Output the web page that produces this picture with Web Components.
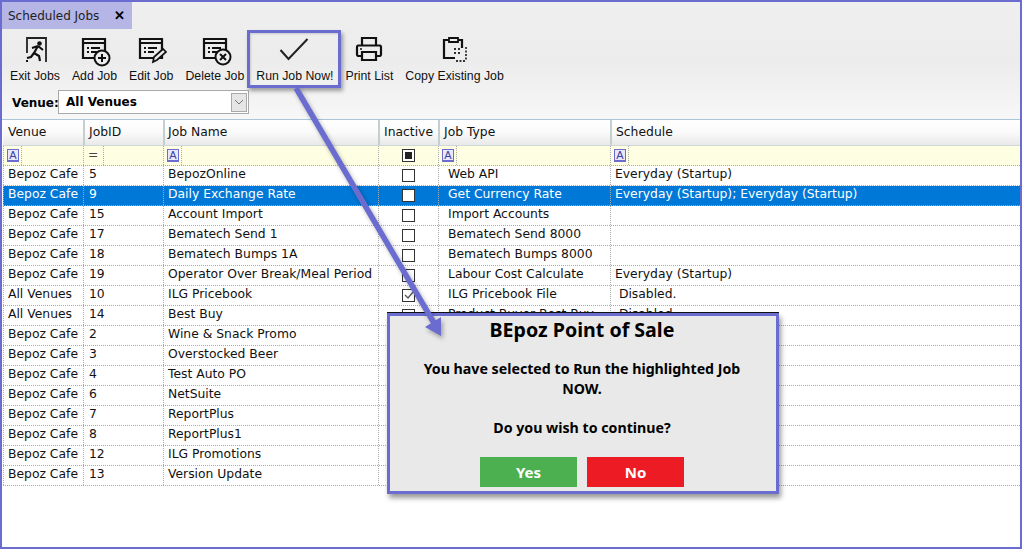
<!DOCTYPE html>
<html>
<head>
<meta charset="utf-8">
<title>Scheduled Jobs</title>
<style>
  html, body { margin: 0; padding: 0; background: #fff; }
</style>
</head>
<body>
<scheduled-jobs>
  <tab-strip label="Scheduled Jobs"></tab-strip>
  <tool-bar>
    <tool-button icon="exit" label="Exit Jobs"></tool-button>
    <tool-button icon="add" label="Add Job"></tool-button>
    <tool-button icon="edit" label="Edit Job"></tool-button>
    <tool-button icon="delete" label="Delete Job"></tool-button>
    <tool-button icon="run" label="Run Job Now!" highlight></tool-button>
    <tool-button icon="print" label="Print List"></tool-button>
    <tool-button icon="copy" label="Copy Existing Job"></tool-button>
  </tool-bar>
  <venue-select value="All Venues"></venue-select>
  <job-grid></job-grid>
  <callout-arrow></callout-arrow>
  <confirm-dialog heading="BEpoz Point of Sale">
    You have selected to Run the highlighted Job NOW.
    <br><br>
    Do you wish to continue?
  </confirm-dialog>
</scheduled-jobs>

<script>
const LABEL_FONT = '"Liberation Sans", Arial, sans-serif';
const GRID_FONT = '"DejaVu Sans", Verdana, sans-serif';

// rows of the grid: venue, id, name, inactive, type, schedule
const JOBS = [
  ['Bepoz Cafe', '5', 'BepozOnline', false, 'Web API', 'Everyday (Startup)'],
  ['Bepoz Cafe', '9', 'Daily Exchange Rate', false, 'Get Currency Rate', 'Everyday (Startup); Everyday (Startup)'],
  ['Bepoz Cafe', '15', 'Account Import', false, 'Import Accounts', ''],
  ['Bepoz Cafe', '17', 'Bematech Send 1', false, 'Bematech Send 8000', ''],
  ['Bepoz Cafe', '18', 'Bematech Bumps 1A', false, 'Bematech Bumps 8000', ''],
  ['Bepoz Cafe', '19', 'Operator Over Break/Meal Period', false, 'Labour Cost Calculate', 'Everyday (Startup)'],
  ['All Venues', '10', 'ILG Pricebook', true, 'ILG Pricebook File', '\u00a0Disabled.'],
  ['All Venues', '14', 'Best Buy', false, 'Product Buyer Best Buy', '\u00a0Disabled.'],
  ['Bepoz Cafe', '2', 'Wine & Snack Promo', false, '', ''],
  ['Bepoz Cafe', '3', 'Overstocked Beer', false, '', ''],
  ['Bepoz Cafe', '4', 'Test Auto PO', false, '', ''],
  ['Bepoz Cafe', '6', 'NetSuite', false, '', ''],
  ['Bepoz Cafe', '7', 'ReportPlus', false, '', ''],
  ['Bepoz Cafe', '8', 'ReportPlus1', false, '', ''],
  ['Bepoz Cafe', '12', 'ILG Promotions', false, '', ''],
  ['Bepoz Cafe', '13', 'Version Update', false, '', '']
];

const WINDOW_ICON = `
  <path d="M5 3h22v19H5z" fill="none" stroke="#111" stroke-width="2.200"/>
  <path d="M5 7h22" stroke="#111" stroke-width="2"/>
  <path d="M9 12h2M9 16h2M13 12h9M13 16h6" stroke="#111" stroke-width="1.800"/>`;

const ICONS = {
  exit: `
    <path d="M8 17V2h19v24" fill="none" stroke="#222" stroke-width="1.800"/>
    <circle cx="20.500" cy="7.500" r="2.300" fill="#111"/>
    <path d="M19 10l-4 7 5 3 1 5M15 17l-3 4-4 1M19 10l5 4M19 10l-6 2" fill="none" stroke="#111" stroke-width="2.200"/>
    <path d="M7 25h2" stroke="#111" stroke-width="2"/>`,
  add: `${WINDOW_ICON}
    <circle cx="24" cy="22" r="7.500" fill="#eee" stroke="#111" stroke-width="2"/>
    <path d="M24 18v8M20 22h8" stroke="#111" stroke-width="2"/>`,
  edit: `${WINDOW_ICON}
    <path d="M18 26l1-5 9-8 3 3-9 8z" fill="#eee" stroke="#111" stroke-width="1.700"/>`,
  delete: `${WINDOW_ICON}
    <circle cx="24" cy="21" r="7.500" fill="#eee" stroke="#111" stroke-width="2"/>
    <path d="M21 18l6 6M27 18l-6 6" stroke="#111" stroke-width="2"/>`,
  run: `<path d="M1.500 14l8 9 19-20" fill="none" stroke="#222" stroke-width="2"/>`,
  print: `
    <path d="M9 9V2h14v7" fill="none" stroke="#111" stroke-width="2.200"/>
    <path d="M9 20H5a1.500 1.500 0 0 1-1-1.500V11a1.500 1.500 0 0 1 1-1.500h22a1.500 1.500 0 0 1 1 1.500v7.500a1.500 1.500 0 0 1-1 1.500h-4" fill="none" stroke="#111" stroke-width="2.200"/>
    <path d="M9 16h14v8H9z" fill="none" stroke="#111" stroke-width="2.200"/>
    <path d="M7 13h2" stroke="#111" stroke-width="1.600"/>`,
  copy: `
    <path d="M16 22H5V4h18v8" fill="none" stroke="#111" stroke-width="2.200"/>
    <path d="M10 6V2h9v4z" fill="#eee" stroke="#111" stroke-width="1.800"/>
    <path d="M15 13h2M19 13h2M15 17h2M19 17h2" stroke="#333" stroke-width="1.800"/>
    <path d="M27 11v14M17 25h10" stroke="#333" stroke-width="1.800" stroke-dasharray="2 1.500"/>`
};

class ScheduledJobs extends HTMLElement {
  constructor() {
    super();
    this.attachShadow({ mode: 'open' });
    this.shadowRoot.innerHTML = `
      <style>
        :host {
          display: flex;
          flex-direction: column;
          position: relative;
          box-sizing: border-box;
          width: 1022px;
          height: 549px;
          overflow: hidden;
          border: 2px solid #6a6dcf;
          background: linear-gradient(#efefef, #ececec 60px, #f7f7f7 115px);
        }
      </style>
      <slot></slot>`;
  }
}

class TabStrip extends HTMLElement {
  constructor() {
    super();
    this.attachShadow({ mode: 'open' });
    this.shadowRoot.innerHTML = `
      <style>
        :host { display: flex; height: 27px; flex: none; }
        .tab {
          display: flex;
          align-items: center;
          width: 130px;
          box-sizing: border-box;
          padding-left: 6px;
          background: #b5b5e6;
          color: #222;
          font: 12px ${GRID_FONT};
        }
        .close { margin-left: 15px; font: bold 13px ${LABEL_FONT}; color: #000; }
      </style>
      <div class="tab"><span>${this.getAttribute('label')}</span><span class="close">\u2715</span></div>`;
  }
}

class ToolBar extends HTMLElement {
  constructor() {
    super();
    this.attachShadow({ mode: 'open' });
    this.shadowRoot.innerHTML = `
      <style>
        :host {
          display: flex;
          flex: none;
          gap: 12px;
          height: 61px;
          box-sizing: border-box;
          padding: 7px 0 0 8px;
        }
      </style>
      <slot></slot>`;
  }
}

class ToolButton extends HTMLElement {
  constructor() {
    super();
    this.attachShadow({ mode: 'open' });
    this.shadowRoot.innerHTML = `
      <style>
        :host {
          display: flex;
          flex-direction: column;
          align-items: center;
          position: relative;
          font: 12.300px/14px ${LABEL_FONT};
          color: #111;
          white-space: nowrap;
        }
        svg { display: block; width: 32px; height: 28px; overflow: visible; margin-bottom: 5px; }
        :host([highlight])::after {
          content: "";
          position: absolute;
          left: -9px;
          right: -8px;
          top: -6px;
          height: 58px;
          box-sizing: border-box;
          border: 3px solid #6a6dcf;
          box-shadow: 2px 3px 4px rgba(0, 0, 0, .35), inset 1px 1px 2px rgba(0, 0, 0, .15);
        }
      </style>
      <svg viewBox="0 0 32 28">${ICONS[this.getAttribute('icon')]}</svg>
      <span>${this.getAttribute('label')}</span>`;
  }
}

class VenueSelect extends HTMLElement {
  constructor() {
    super();
    this.attachShadow({ mode: 'open' });
    this.shadowRoot.innerHTML = `
      <style>
        :host {
          display: flex;
          flex: none;
          align-items: center;
          gap: 5px;
          height: 24px;
          margin-bottom: 5px;
          padding-left: 10px;
          font: bold 12px ${GRID_FONT};
          color: #000;
        }
        .label { width: 41px; font-size: 12px; padding-top: 1px; }
        .combo {
          display: flex;
          align-items: center;
          justify-content: space-between;
          box-sizing: border-box;
          width: 191px;
          height: 24px;
          padding: 0 1px 0 7px;
          background: #fff;
          border: 1px solid #a9a9a9;
        }
        .drop {
          display: flex;
          align-items: center;
          justify-content: center;
          width: 16px;
          height: 19px;
          box-sizing: border-box;
          background: #e6e6e6;
          border: 1px solid #aaa;
        }
      </style>
      <span class="label">Venue:</span>
      <div class="combo">
        <span>${this.getAttribute('value')}</span>
        <span class="drop"><svg width="10" height="6" viewBox="0 0 10 6"><path d="M1 1l4 4 4-4" fill="none" stroke="#777"/></svg></span>
      </div>`;
  }
}

class JobGrid extends HTMLElement {
  constructor() {
    super();
    this.attachShadow({ mode: 'open' });
  }

  connectedCallback() {
    const header = ['Venue', 'JobID', 'Job Name', 'Inactive', 'Job Type', 'Schedule'];
    const letterFilter = '<div class="cell filter"><span class="letter">A</span></div>';
    const rows = JOBS.map((job, i) => `
      <div class="row${i === 1 ? ' selected' : ''}">
        <div class="cell">${job[0]}</div>
        <div class="cell id">${job[1]}</div>
        <div class="cell">${job[2].replace('&', '&amp;')}</div>
        <div class="cell box"><span class="check">${job[3] ? '<svg width="11" height="11" viewBox="0 0 11 11"><path d="M2 5l3 3 5-6" fill="none" stroke="#555" stroke-width="1.300"/></svg>' : ''}</span></div>
        <div class="cell type">${job[4]}</div>
        <div class="cell">${job[5]}</div>
      </div>`).join('');
    this.shadowRoot.innerHTML = `
      <style>
        :host {
          display: block;
          flex: 1;
          padding-left: 1px;
          background: #fff;
          border-top: 1px solid #a9c7d8;
          font: 12.350px/17px ${GRID_FONT};
          color: #111;
          white-space: nowrap;
        }
        .row, .head {
          display: grid;
          grid-template-columns: 80px 80px 215px 60px 172px 1fr;
          height: 20px;
          box-sizing: border-box;
          border-bottom: 1px dotted #aaa;
        }
        .head { height: 26px; border-bottom: 1px solid #cfd8d8; }
        .head div {
          box-sizing: border-box;
          padding: 4px 0 0 3px;
          background: linear-gradient(#fff, #fafafa 50%, #e9e9e9);
          border-left: 2px solid #c4d0d0;
        }
        .head div:first-child { border-left: 0; padding-left: 5px; }
        .head div:nth-child(2) { padding-left: 4px; }
        .head div:nth-child(4) { padding-left: 4px; }
        .head div:nth-child(5) { padding-left: 4px; }
        .head div:nth-child(6) { padding-left: 4px; }
        .filters { background: #fefee2; }
        .cell {
          box-sizing: border-box;
          padding-left: 4px;
          border-left: 1px dotted #aaa;
          overflow: hidden;
        }
        .id { padding-left: 5px; }
        .type { padding-left: 9px; }
        .box { display: flex; justify-content: center; padding: 3px 0 0; }
        .check {
          display: flex;
          align-items: center;
          justify-content: center;
          width: 13px;
          height: 13px;
          box-sizing: border-box;
          background: #fff;
          border: 1px solid #333;
        }
        .check.on::after { content: ""; width: 7px; height: 7px; background: #222; }
        .filter { display: flex; padding: 0; }
        .filter::before { order: 2; content: ""; width: 1px; margin-left: 2px; border-left: 1px dotted #aaa; }
        .letter {
          box-sizing: border-box;
          width: 12px;
          height: 13px;
          margin: 3px 0 0 3px;
          background: #e8e8f8;
          border: 1px solid #6a6dcf;
          border-bottom-width: 2px;
          color: #3d40a8;
          font: 11px/10px ${LABEL_FONT};
          text-align: center;
        }
        .equals { width: 13px; margin: 1px 0 0 4px; color: #444; }
        .selected { background: #0078d7; color: #fff; }
      </style>
      <div class="head">${header.map(h => `<div>${h}</div>`).join('')}</div>
      <div class="row filters">
        ${letterFilter}
        <div class="cell filter"><span class="equals">=</span></div>
        ${letterFilter}
        <div class="cell box"><span class="check on"></span></div>
        ${letterFilter}
        ${letterFilter}
      </div>
      ${rows}`;
  }
}

class CalloutArrow extends HTMLElement {
  constructor() {
    super();
    this.attachShadow({ mode: 'open' });
    // coordinates are the free canvas of the annotation, drawn over the window
    this.shadowRoot.innerHTML = `
      <style>
        :host { position: absolute; left: -2px; top: -2px; z-index: 3; pointer-events: none; }
        svg { display: block; filter: drop-shadow(2px 3px 2px rgba(0, 0, 0, .3)); }
      </style>
      <svg width="1022" height="549" viewBox="0 0 1022 549">
        <path d="M296 88L434 323" stroke="#6a6dcf" stroke-width="5.500" fill="none"/>
        <path d="M441 336L425 327L441 317z" fill="#6a6dcf"/>
      </svg>`;
  }
}

class ConfirmDialog extends HTMLElement {
  constructor() {
    super();
    this.attachShadow({ mode: 'open' });
    this.shadowRoot.innerHTML = `
      <style>
        :host {
          position: absolute;
          left: 385px;
          top: 311px;
          z-index: 2;
          box-sizing: border-box;
          width: 392px;
          height: 181px;
          display: flex;
          flex-direction: column;
          align-items: center;
          padding: 2px 2px 0 0;
          background: #e9e9e9;
          border: 3px solid #6a6dcf;
          box-shadow: 0 -1px 0 #111, 2px 4px 5px rgba(0, 0, 0, .4);
          font: bold 14.200px/19.500px "Noto Sans", sans-serif;
          color: #000;
          text-align: center;
        }
        h1 { margin: 0 0 17px; font: bold 19.600px/24px "Noto Sans", sans-serif; }
        .message { width: 330px; height: 98px; }
        .actions { display: flex; gap: 10px; }
        .actions div {
          width: 97px;
          height: 30px;
          font-size: 15px;
          line-height: 30px;
          color: #fff;
        }
        .yes { background: #4caf50; }
        .no { background: #ed1c24; }
      </style>
      <h1>${this.getAttribute('heading')}</h1>
      <div class="message"><slot></slot></div>
      <div class="actions"><div class="yes">Yes</div><div class="no">No</div></div>`;
  }
}

customElements.define('scheduled-jobs', ScheduledJobs);
customElements.define('tab-strip', TabStrip);
customElements.define('tool-bar', ToolBar);
customElements.define('tool-button', ToolButton);
customElements.define('venue-select', VenueSelect);
customElements.define('job-grid', JobGrid);
customElements.define('callout-arrow', CalloutArrow);
customElements.define('confirm-dialog', ConfirmDialog);
</script>
</body>
</html>
